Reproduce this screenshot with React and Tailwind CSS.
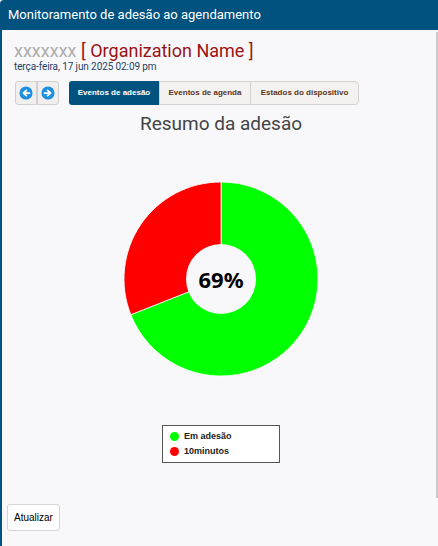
import { useState } from "react";

const BLUE = "#01527f";
const TABS = [
  { label: "Eventos de adesão", w: "w-[91px]" },
  { label: "Eventos de agenda", w: "w-[91px]" },
  { label: "Estados do dispositivo", w: "w-[107px]" },
];

// pct of the green ("Em adesão") slice, starting at 12 o'clock, clockwise
function Donut({ pct = 69 }) {
  const r = 97, c = 100;
  const a = ((-90 + pct * 3.6) * Math.PI) / 180;
  const x = c + r * Math.cos(a), y = c + r * Math.sin(a);
  const big = pct > 50 ? 1 : 0;
  return (
    <div className="relative w-[196px] h-[196px]">
      <svg width="196" height="196" viewBox="2 2 196 196">
        <path d={`M${c},${c} L${c},${c - r} A${r},${r} 0 ${big} 1 ${x},${y} Z`} fill="#00ff00" stroke="#fff" strokeWidth="0.8" />
        <path d={`M${c},${c} L${x},${y} A${r},${r} 0 ${1 - big} 1 ${c},${c - r} Z`} fill="#ff0000" stroke="#fff" strokeWidth="0.8" />
        <circle cx={c} cy={c} r="35" fill="#f8f8fb" />
      </svg>
      <div className="absolute inset-0 flex items-center justify-center text-[22px] font-bold text-black font-['Noto_Sans',sans-serif]">{pct}%</div>
    </div>
  );
}

const ArrowBtn = ({ dir }) => (
  <button className="w-[22px] h-[24px] flex items-center justify-center bg-[#f1eeee] border border-[#d3cfcf] first:rounded-l-[3px] last:rounded-r-[3px]">
    <svg width="14" height="14" viewBox="0 0 16 16">
      <circle cx="8" cy="8" r="7.5" fill="#1b8fe0" />
      {dir === "left" ? (
        <path d="M12 8H6.5M8.5 5L5 8l3.5 3" stroke="#fff" strokeWidth="2" fill="none" strokeLinecap="round" strokeLinejoin="round" />
      ) : (
        <path d="M4 8h5.5M7.5 5L11 8l-3.5 3" stroke="#fff" strokeWidth="2" fill="none" strokeLinecap="round" strokeLinejoin="round" />
      )}
    </svg>
  </button>
);

export default function App() {
  const [tab, setTab] = useState(0);
  return (
    <div className="w-[438px] h-[546px] flex flex-col bg-[#f8f8fb] font-['Roboto',sans-serif] overflow-hidden relative">
      <div className="h-[30px] shrink-0 flex items-center px-[8px] rounded-tl-[4px] text-white text-[13px]" style={{ background: BLUE }}>
        Monitoramento de adesão ao agendamento
      </div>
      <div className="flex-1 flex flex-col border-l-2 border-[#01527f] pl-[12px] pr-[8px]">
        <div className="mt-[9px] text-[18px] leading-[24px] whitespace-nowrap">
          <span className="text-[#acacac]">xxxxxxx</span>{" "}
          <span className="text-[#9b1212]">[ Organization Name ]</span>
        </div>
        <div className="text-[10px] leading-[11px] text-[#24405e] -mt-[2px] tracking-[-0.1px]">terça-feira, 17 jun 2025 02:09 pm</div>

        <div className="flex items-center mt-[9px] ml-[1px]">
          <div className="flex">
            <ArrowBtn dir="left" />
            <ArrowBtn dir="right" />
          </div>
          <div className="flex ml-[10px] border border-[#d6d1d1] rounded-[4px] bg-[#f4f1f1] h-[24px] font-['Liberation_Sans',sans-serif] text-[8px] font-bold">
            {TABS.map((t, i) => (
              <button
                key={t.label}
                onClick={() => setTab(i)}
                className={`${t.w} whitespace-nowrap flex items-center justify-center border-r border-[#d6d1d1] last:border-r-0 ${tab === i ? "bg-[#01527f] text-white rounded-l-[3px] -my-[1px] -ml-[1px] h-[24px]" : "h-full text-[#5a3520]"}`}
              >
                {t.label}
              </button>
            ))}
          </div>
        </div>

        <div className="text-center text-[19px] text-[#444] mt-[7px] leading-[24px] pr-[2px]">Resumo da adesão</div>

        <div className="flex justify-center mt-[45px] pr-[2px]">
          <Donut pct={69} />
        </div>

        <div className="flex justify-center mt-[48px] pr-[2px]">
          <div className="w-[118px] border border-[#555] bg-white px-[7px] py-[3px] font-['Liberation_Sans',sans-serif] text-[9px] font-bold text-[#222]">
            <div className="flex items-center gap-[5px] h-[15px]">
              <span className="w-[9px] h-[9px] rounded-full bg-[#00ff00]" />Em adesão
            </div>
            <div className="flex items-center gap-[5px] h-[15px]">
              <span className="w-[9px] h-[9px] rounded-full bg-[#ff0000]" />10minutos
            </div>
          </div>
        </div>

        <div className="mt-auto mb-[15px] -ml-[7px]">
          <button className="h-[27px] px-[6px] bg-white border border-[#d4d4d4] rounded-[3px] text-[10px] text-black font-['Liberation_Sans',sans-serif]">Atualizar</button>
        </div>
      </div>
      <div className="absolute right-0 top-[32px] w-[2px] h-[466px] bg-[#c9c9cc]" />
    </div>
  );
}
